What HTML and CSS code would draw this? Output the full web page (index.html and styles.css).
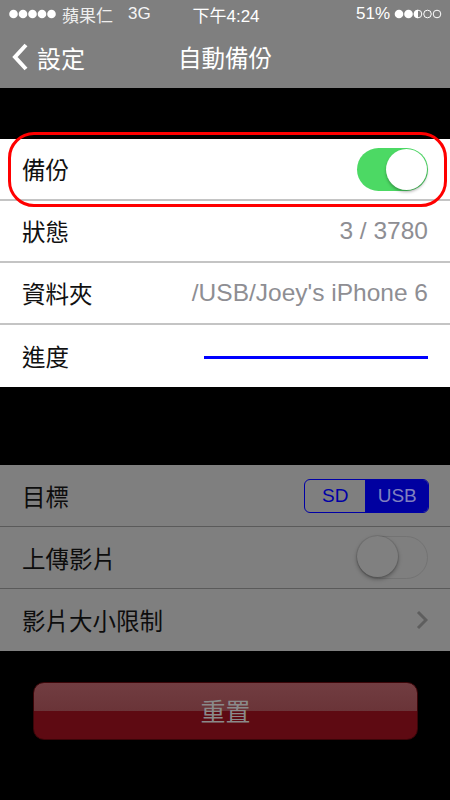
FILE: index.html
```html
<!DOCTYPE html>
<html lang="zh-Hant">
<head>
<meta charset="utf-8">
<link rel="stylesheet" href="styles.css">
</head>
<body>
<div class="screen">
  <header class="top">
    <div class="status">
      <div class="st-left">
        <svg class="dots" width="48" height="10" viewBox="0 0 48 10">
          <circle cx="4.5" cy="5" r="4.3" fill="#fff"/>
          <circle cx="14" cy="5" r="4.3" fill="#fff"/>
          <circle cx="23.5" cy="5" r="4.3" fill="#fff"/>
          <circle cx="33" cy="5" r="4.3" fill="#fff"/>
          <circle cx="42.5" cy="5" r="4.3" fill="#fff"/>
        </svg>
        <span class="carrier">蘋果仁</span><span class="net">3G</span></div>
      <div class="st-time">下午4:24</div>
      <div class="st-right"><span class="pct">51%</span>
        <svg class="batt" width="48" height="12" viewBox="0 0 48 12">
          <circle cx="5" cy="6" r="4.3" fill="#fff"/>
          <circle cx="14.5" cy="6" r="4.3" fill="#fff"/>
          <circle cx="24" cy="6" r="3.8" fill="none" stroke="#fff" stroke-width="1"/>
          <path d="M24 1.7 A4.3 4.3 0 0 0 24 10.3 Z" fill="#fff"/>
          <circle cx="33.5" cy="6" r="3.8" fill="none" stroke="#fff" stroke-width="1"/>
          <circle cx="43" cy="6" r="3.8" fill="none" stroke="#fff" stroke-width="1"/>
        </svg>
      </div>
    </div>
    <nav class="nav">
      <div class="back">
        <svg width="18" height="28" viewBox="0 0 18 28"><path d="M15 2 L4 14 L15 26" fill="none" stroke="#fff" stroke-width="4"/></svg>
        <span>設定</span>
      </div>
      <div class="title">自動備份</div>
    </nav>
  </header>

  <section class="group white">
    <div class="row first">
      <span class="label">備份</span>
      <div class="switch on"><div class="knob"></div></div>
      <div class="highlight"></div>
    </div>
    <div class="row">
      <span class="label">狀態</span>
      <span class="value">3 / 3780</span>
    </div>
    <div class="row">
      <span class="label">資料夾</span>
      <span class="value">/USB/Joey's iPhone 6</span>
    </div>
    <div class="row last">
      <span class="label">進度</span>
      <div class="progress"></div>
    </div>
  </section>

  <section class="group dim">
    <div class="row">
      <span class="label">目標</span>
      <div class="seg"><span class="seg-item">SD</span><span class="seg-item sel">USB</span></div>
    </div>
    <div class="row">
      <span class="label">上傳影片</span>
      <div class="switch off"><div class="knob"></div></div>
    </div>
    <div class="row last">
      <span class="label">影片大小限制</span>
      <svg class="chev" width="12" height="20" viewBox="0 0 12 20"><path d="M2 2 L10 10 L2 18" fill="none" stroke="#5e5e5e" stroke-width="3"/></svg>
    </div>
  </section>

  <div class="btn-wrap">
    <div class="reset"><span>重置</span></div>
  </div>
</div>
</body>
</html>
```
FILE: styles.css
```css
html, body {
  margin: 0;
  padding: 0;
  background: #000;
}
body {
  font-family: "Liberation Sans", "Noto Sans CJK TC", sans-serif;
}
.screen {
  width: 450px;
  height: 800px;
  background: #000;
  overflow: hidden;
}
.top {
  background: #7f7f7f;
  color: #fff;
}
.status {
  height: 28px;
  display: flex;
  align-items: center;
  justify-content: space-between;
  padding: 0 8px 0 9px;
  font-size: 17px;
  position: relative;
}
.st-left {
  display: flex;
  align-items: center;
  width: 160px;
}
.dots {
  margin-right: 5px;
}
.carrier { margin-right: 15px; color: #eee; }
.net { color: #f5f5f5; }
.st-time {
  position: absolute;
  left: 0;
  right: 0;
  text-align: center;
  font-size: 17px;
  padding-left: 2px;
}
.st-right {
  display: flex;
  align-items: center;
  gap: 4px;
  font-size: 17px;
}
.nav {
  height: 60px;
  position: relative;
  display: flex;
  align-items: center;
}
.back {
  display: flex;
  align-items: center;
  gap: 8px;
  padding-left: 11px;
  font-size: 24px;
  margin-top: -2px;
}
.title {
  position: absolute;
  left: 0;
  right: 0;
  text-align: center;
  font-size: 23.5px;
  margin-top: -2px;
  pointer-events: none;
}

.group {
  display: flex;
  flex-direction: column;
}
.white {
  margin-top: 51px;
  background: #fff;
}
.row {
  height: 62px;
  box-sizing: border-box;
  display: flex;
  align-items: center;
  justify-content: space-between;
  padding: 0 22px;
  position: relative;
  font-size: 23.5px;
}
.white .row {
  border-bottom: 2px solid #c4c4c4;
  color: #111;
}
.white .row.last { border-bottom: none; }
.value {
  color: #8e8e93;
  font-size: 24.5px;
}
.progress {
  width: 224px;
  height: 3px;
  background: #0000ff;
  margin-top: 2px;
}
.highlight {
  position: absolute;
  left: 8px;
  top: -7px;
  width: 439px;
  height: 75px;
  box-sizing: border-box;
  border: 3px solid #ff0000;
  border-radius: 26px;
  pointer-events: none;
}
.switch {
  width: 71px;
  height: 43px;
  border-radius: 22px;
  box-sizing: border-box;
  position: relative;
}
.switch.on {
  background: #4cd964;
}
.switch.on .knob {
  position: absolute;
  right: 1px;
  top: 1px;
  width: 41px;
  height: 41px;
  border-radius: 50%;
  background: #fff;
  box-shadow: 0 2px 3px rgba(0,0,0,0.3);
}
.switch.off {
  border: 1.5px solid #737373;
  background: #7f7f7f;
}
.switch.off .knob {
  position: absolute;
  left: -1px;
  top: -1px;
  width: 41px;
  height: 41px;
  border-radius: 50%;
  background: #808080;
  box-shadow: 0 2px 4px rgba(0,0,0,0.35), 0 0 0 1px rgba(0,0,0,0.08);
}

.dim {
  margin-top: 78px;
  background: #7f7f7f;
}
.dim .row {
  border-bottom: 1.5px solid #5a5a5a;
  color: #0d0d0d;
}
.dim .row.last { border-bottom: none; }
.seg {
  display: flex;
  width: 125px;
  height: 34px;
  box-sizing: border-box;
  border: 1.5px solid #0000a6;
  border-radius: 6px;
  overflow: hidden;
  margin-right: -1px;
}
.seg-item {
  flex: 1;
  display: flex;
  align-items: center;
  justify-content: center;
  font-size: 19px;
  color: #0000a6;
}
.seg-item:first-child {
  border-right: 1.5px solid #0000a6;
}
.seg-item.sel {
  background: #0000a0;
  color: #8080bf;
  flex: 1.02;
}
.chev { margin-right: 0; }

.btn-wrap {
  padding: 31px 32px 0 33px;
}
.reset {
  height: 58px;
  border-radius: 11px;
  background: linear-gradient(to bottom, #713d41 0%, #6a3438 50%, #5e0a12 50%, #5e0a12 100%);
  border: 1px solid #3a0508;
  box-sizing: border-box;
  display: flex;
  align-items: center;
  justify-content: center;
  color: #8a8a8a;
  font-size: 25px;
}
.reset span { margin-top: -2px; }
```
